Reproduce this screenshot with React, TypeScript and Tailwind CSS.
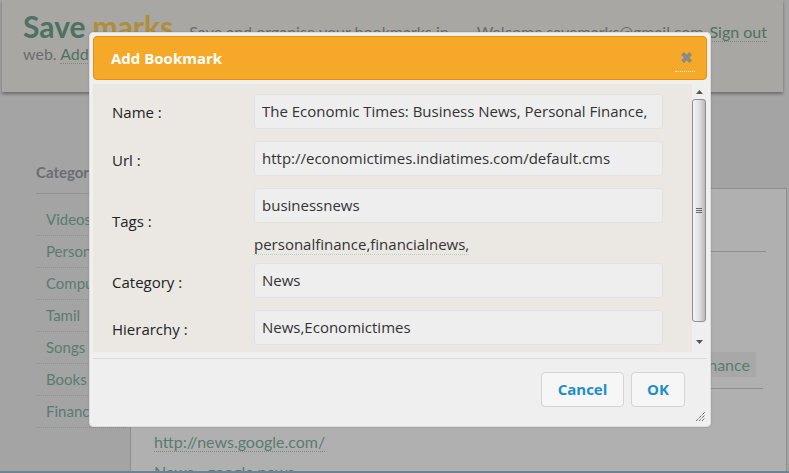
import React from "react";

const sideItems = ["Videos", "Personal", "Computers", "Tamil", "Songs", "Books", "Finance"];

function Field({ value }: { value: string }) {
  return (
    <div className="h-[35px] w-[409px] rounded-[4px] border border-[#e2e2e2] bg-[#eeeeee] pl-[7px] pr-[6px] overflow-hidden break-words leading-[33px] text-[15px] text-[#333333]">
      {value}
    </div>
  );
}

export default function App() {
  return (
    <div className="relative w-[789px] h-[473px] overflow-hidden bg-[#a4a4a4] font-['Lato',sans-serif]">
      {/* Header */}
      <div className="ml-[2px] mr-[6px] h-[92px] bg-[#a9a7a4] shadow-[0_2px_3px_rgba(0,0,0,0.35)] pl-[21px] pr-[16px] pt-[8px]">
        <div className="flex items-baseline">
          <span className="text-[30px] font-bold leading-[36px] text-[#4d7262]">Save</span>
          <span className="ml-[7px] text-[30px] font-bold leading-[36px] text-[#b08d3c]">marks</span>
          <span className="ml-[16px] text-[16px] text-[#6c6c6c]">Save and organise your bookmarks in</span>
          <span className="ml-auto text-[16px] text-[#6c6c6c]">Welcome,savemarks@gmail.com</span>
          <span className="ml-[6px] text-[16px] text-[#4d7262] border-b border-dotted border-[#7a8a84] leading-[18px]">Sign out</span>
        </div>
        <div className="text-[16px] text-[#6c6c6c] leading-[20px]">
          web. <span className="text-[#4d7262] border-b border-dotted border-[#7a8a84]">Add bookmarks</span>
        </div>
      </div>

      {/* Body */}
      <div className="flex">
        <div className="w-[130px] shrink-0 pl-[36px] pt-[70px]">
          <div className="text-[15px] font-bold text-[#6b6e70] leading-[20px]">Categories</div>
          <div className="mt-[11px] border-t border-[#939393] w-[90px]" />
          <div className="mt-[10px]">
            {sideItems.map((s) => (
              <div key={s} className="h-[32px] flex items-center pl-[10px] text-[15px] text-[#5b7b70] border-b border-dotted border-[#939393] w-[90px] whitespace-nowrap">
                {s}
              </div>
            ))}
          </div>
        </div>
        <div className="mt-[96px] h-[300px] flex-1 mr-[2px] border-l border-t border-r border-[#8e8e8e] bg-[#b0b0b0] pl-[23px] pr-[20px]">
          <div className="mt-[62px] border-t border-[#8e8e8e]" />
          <div className="mt-[100px] flex justify-end pr-[10px]">
            <span className="px-[6px] h-[25px] flex items-center bg-[#a8a8a8] text-[16px] text-[#5b7b70]">personalfinance</span>
          </div>
          <div className="mt-[11px] border-t border-[#8e8e8e] mr-[3px]" />
          <div className="mt-[43px] text-[16px] text-[#5b7b70] leading-[20px]">
            <span className="border-b border-dotted border-[#7d8a86]">http://news.google.com/</span>
          </div>
          <div className="mt-[10px] text-[16px] text-[#5b7b70] leading-[20px]">News›› google news</div>
        </div>
      </div>
      <div className="absolute left-0 right-0 bottom-0 h-[2px] bg-[#6d8394]" />

      {/* Dialog */}
      <div className="absolute left-[89px] top-[32px] w-[622px] h-[395px] rounded-[4px] bg-[#f0f0f0] border border-[#dddddd] p-[3px] flex flex-col font-['Open_Sans',sans-serif] shadow-[0_0_2px_rgba(0,0,0,0.2)]">
        <div className="h-[44px] shrink-0 rounded-[4px] bg-[#f6a828] border border-[#e78f08] flex items-center pl-[17px] pr-[10px]">
          <span className="text-[15px] font-bold text-white">Add Bookmark</span>
          <span className="ml-auto mr-[2px] w-[16px] h-[20px] relative flex items-start justify-center">
            <span className="text-[15px] font-bold text-[#8a8a8a] leading-[18px]">✖</span>
            <span className="absolute left-[-3px] right-[-1px] bottom-[-4px] border-b border-dotted border-white" />
          </span>
        </div>
        <div className="relative mt-[4px] h-[268px] shrink-0 bg-[#ebe8e4] flex">
          <div className="flex-1 overflow-hidden pt-[10px]">
            <div className="flex items-center h-[35px]">
              <div className="w-[161px] pl-[19px] text-[15px] text-[#222222] pt-[2px]">Name :</div>
              <Field value="The Economic Times: Business News, Personal Finance, Financial News" />
            </div>
            <div className="flex items-center h-[35px] mt-[12px]">
              <div className="w-[161px] pl-[19px] text-[15px] text-[#222222] pt-[3px]">Url :</div>
              <Field value="http://economictimes.indiatimes.com/default.cms" />
            </div>
            <div className="flex items-center mt-[12px]">
              <div className="w-[161px] pl-[19px] text-[15px] text-[#222222]">Tags :</div>
              <div className="flex flex-col">
                <Field value="businessnews" />
                <div className="mt-[11px] h-[20px] text-[15px] text-[#333333] leading-[20px]">
                  <span className="border-b border-dotted border-[#b6cdb9]">personalfinance,financialnews,</span>
                </div>
              </div>
            </div>
            <div className="flex items-center h-[35px] mt-[9px]">
              <div className="w-[161px] pl-[19px] text-[15px] text-[#222222] pt-[3px]">Category :</div>
              <Field value="News" />
            </div>
            <div className="flex items-center h-[35px] mt-[12px]">
              <div className="w-[161px] pl-[19px] text-[15px] text-[#222222] pt-[3px]">Hierarchy :</div>
              <Field value="News,Economictimes" />
            </div>
          </div>
          {/* Scrollbar */}
          <div className="w-[15px] shrink-0 bg-[#efefef] relative">
            <svg className="absolute left-[4px] top-[6px]" width="7" height="4" viewBox="0 0 7 4">
              <path d="M0 4 L3.5 0 L7 4 Z" fill="#555" />
            </svg>
            <div className="absolute left-[0px] w-[14px] top-[15px] h-[223px] rounded-[3px] border border-[#8f8f8f] bg-gradient-to-r from-[#f4f4f4] via-[#e2e2e2] to-[#b9b9b9] flex items-center justify-center">
              <div className="flex flex-col gap-[1px]">
                <div className="w-[6px] h-[1px] bg-[#666]" />
                <div className="w-[6px] h-[1px] bg-[#666]" />
                <div className="w-[6px] h-[1px] bg-[#666]" />
              </div>
            </div>
            <svg className="absolute left-[4px] top-[256px]" width="7" height="4" viewBox="0 0 7 4">
              <path d="M0 0 L3.5 4 L7 0 Z" fill="#555" />
            </svg>
          </div>
        </div>
        <div className="flex-1 bg-[#efefef] flex flex-col">
          <div className="mt-[6px] border-t border-[#dcdcdc]" />
          <div className="flex justify-end gap-[7px] pr-[22px] mt-[13px]">
            <button className="w-[83px] h-[35px] rounded-[4px] border border-[#d3d3d3] bg-[#f6f6f6] text-[15px] font-bold text-[#1d8fc8]">Cancel</button>
            <button className="w-[54px] h-[35px] rounded-[4px] border border-[#d3d3d3] bg-[#f6f6f6] text-[15px] font-bold text-[#1d8fc8]">OK</button>
          </div>
          <div className="flex-1" />
          <svg className="self-end mr-[1px] mb-[1px]" width="11" height="11" viewBox="0 0 11 11">
            <path d="M1 10 L10 1 M4 10 L10 4 M7 10 L10 7" stroke="#333" strokeWidth="1" strokeDasharray="1 1" />
          </svg>
        </div>
      </div>
    </div>
  );
}
